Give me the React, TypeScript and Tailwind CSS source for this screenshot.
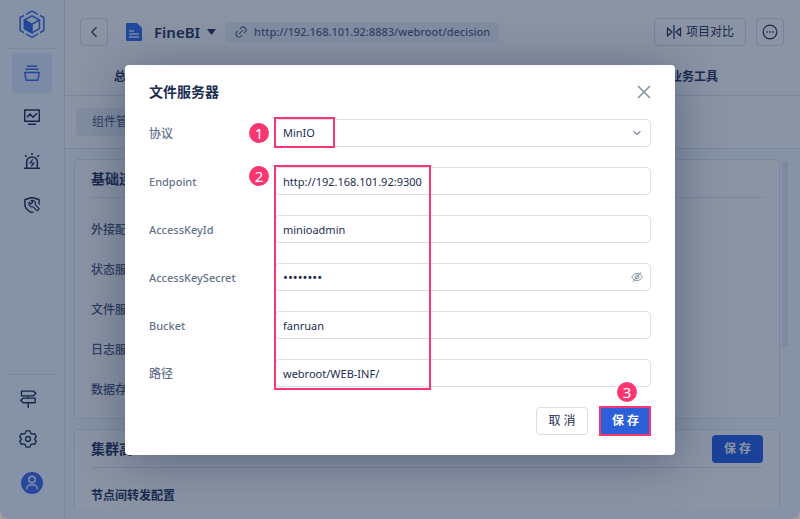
import type { ReactNode } from 'react';
import { ChevronDown, ChevronLeft, Link2, X } from 'lucide-react';

interface IconProps {
  className?: string;
  children: ReactNode;
}

const Icon = ({ className = 'size-4', children }: IconProps) => (
  <svg className={className} viewBox="0 0 16 16" fill="none" stroke="currentColor" strokeWidth="1.2" strokeLinejoin="round">
    {children}
  </svg>
);

const Logo = () => (
  <svg className="size-7" viewBox="0 0 28 28" fill="none" stroke="currentColor" strokeWidth="1.5">
    <path d="M8 4.300 14 1l6 3.300M22 5.500l3.800 2v13L22 22.700M20 23.900 14 27.300l-6-3.400M6 22.700l-3.800-2.200v-13L6 5.500" />
    <path d="M14 5.800 21.500 10v8.600L14 22.800l-7.500-4.200V10z" />
    <path d="M6.500 10 14 14.200v8.600l-7.500-4.200z" fill="currentColor" />
    <path d="M14 14.200 21.500 10" />
  </svg>
);

const ProjectsIcon = () => (
  <Icon>
    <path d="M3 1.200h10M1.500 4.200h13" strokeWidth="1.600" />
    <path d="M.8 7.500h14.400l-1.300 7.700H2.100z" strokeWidth="1.500" />
  </Icon>
);

const MonitorIcon = () => (
  <Icon>
    <path d="M.7.900h14.600v11.400H.7zM4 15.300h8M3 8.200l3-3.200 3 3.200 4-4" strokeWidth="1.500" />
  </Icon>
);

const AlarmIcon = () => (
  <Icon>
    <path d="M0 15.200h16M2.700 15V8.500a5.300 4.600 0 0 1 10.600 0V15M8 0v2M1 2.200l1.700 1.600M15 2.200l-1.700 1.600" strokeWidth="1.500" />
    <path d="M8.800 6.400 6 10h4l-2.800 3.400" />
  </Icon>
);

const ShieldToolIcon = () => (
  <Icon>
    <path d="M9.500 15.200 8 15.600C4 14 .9 11 .9 7.500V2.400C3.500 2.400 5.500.7 8 .7s4.500 1.700 7.100 1.700v5" strokeWidth="1.500" />
    <path d="M5.200 5.200 7 7l1.700-1.600-1.600-1.900a3.300 3.300 0 0 1 4.200 4.200l3.900 4.200-2 2-4.100-4A3.400 3.400 0 0 1 5.200 5.200z" />
  </Icon>
);

const SignpostIcon = () => (
  <Icon className="size-[18px]">
    <path d="M2.200 1h10.600l2.300 2-2.300 2.200H2.200zM14.400 7.200H3.800L1.500 9.300l2.300 2h10.600zM8.200 5.200v2M8.200 11.300V16" />
  </Icon>
);

const GearIcon = () => (
  <Icon className="size-[18px]">
    <path d="M6.300.8h3.400l.7 2 1.400.8 2.100-.4 1.500 2.800L14 7.600v.8l1.400 1.600-1.500 2.800-2.100-.4-1.400.8-.7 2H6.300l-.7-2-1.400-.8-2.100.4L.6 10 2 8.400v-.8L.6 6l1.500-2.800 2.100.4 1.400-.8z" />
    <circle cx="8" cy="8" r="2.200" />
  </Icon>
);

const DocIcon = () => (
  <svg className="h-[18px] w-4" viewBox="0 0 16 18">
    <path d="M1 0h10l5 5v12a1 1 0 0 1-1 1H1a1 1 0 0 1-1-1V1a1 1 0 0 1 1-1z" fill="#2d66ee" />
    <path d="M3 8h5M3 11h10M3 14h10" stroke="#dce7ff" strokeWidth="1.300" />
  </svg>
);

const CompareIcon = () => (
  <Icon>
    <path d="M8 1v14M1.500 4v8L6 8zM14.500 4v8L10 8z" strokeWidth="1.300" />
  </Icon>
);

const MoreIcon = () => (
  <Icon>
    <circle cx="8" cy="8" r="6.800" />
    <path d="M4.300 8h1.400M7.300 8h1.400M10.300 8h1.400" strokeWidth="1.500" />
  </Icon>
);

const EyeOffIcon = () => (
  <Icon className="size-3">
    <path d="M1 8c1.600-3 4-4.800 7-4.800S13.400 5 15 8c-1.600 3-4 4.800-7 4.800S2.600 11 1 8zM2.500 14.500l11-13" />
    <circle cx="8" cy="8" r="2.600" />
  </Icon>
);

const mainNav = [
  { label: '项目', icon: <ProjectsIcon />, active: true },
  { label: '监控', icon: <MonitorIcon /> },
  { label: '告警', icon: <AlarmIcon /> },
  { label: '运维', icon: <ShieldToolIcon /> },
];

const Sidebar = () => (
  <aside className="flex w-[65px] shrink-0 flex-col border-r border-[#dfe5f0] bg-[#f5faff] text-[#12264c]">
    <div className="mx-2 flex h-[49px] items-center justify-center border-b border-[#dfe5ec] text-[#2d62e8]">
      <Logo />
    </div>
    <nav className="mt-1 flex flex-col items-center gap-1">
      {mainNav.map((item) => (
        <button
          key={item.label}
          aria-label={item.label}
          className={item.active
            ? 'flex size-10 items-center justify-center rounded bg-[#dfeaff] text-[#2d62e8]'
            : 'flex size-10 items-center justify-center rounded'}
        >
          {item.icon}
        </button>
      ))}
    </nav>
    <div className="mx-2 mt-auto flex h-[145px] flex-col items-start border-t border-[#dfe5ec] pt-1">
      <button aria-label="导航" className="flex size-10 items-center justify-center"><SignpostIcon /></button>
      <button aria-label="设置" className="flex size-10 items-center justify-center"><GearIcon /></button>
      <button aria-label="用户" className="flex size-12 items-center justify-center">
        <svg className="size-[22px]" viewBox="0 0 22 22" fill="none" stroke="#dce7ff" strokeWidth="1.700">
          <circle cx="11" cy="11" r="11" fill="#3468f0" stroke="none" />
          <circle cx="11" cy="7.500" r="3.200" />
          <path d="M5.500 17.500c0-6.500 11-6.500 11 0" />
        </svg>
      </button>
    </div>
  </aside>
);

const services = ['外接配置库', '状态服务器', '文件服务器', '日志服务器', '数据存储'];

const Page = () => (
  <div className="flex min-w-0 flex-1 flex-col bg-[#f5faff]">
    <div className="bg-white">
      <header className="flex h-16 items-center pr-4 pl-[15px]">
        <button aria-label="返回" className="flex size-7 items-center justify-center rounded border border-[#d5dce8]">
          <ChevronLeft size={18} strokeWidth={1.5} />
        </button>
        <div className="ml-[18px] flex items-center">
          <DocIcon />
          <h1 className="ml-3 text-[15px] font-semibold">FineBI</h1>
          <svg className="ml-[7px] h-[6px] w-[9px]" viewBox="0 0 9 6"><path d="M0 0h9L4.500 6z" fill="currentColor" /></svg>
        </div>
        <a href="#project" className="ml-[9px] flex h-5 items-center gap-[6px] rounded-sm bg-[#edf1f7] px-[9px] text-[11px] font-medium text-[#4a5c80]">
          <Link2 size={14} strokeWidth={1.8} className="-rotate-45" />
          http://192.168.101.92:8883/webroot/decision
        </a>
        <button className="ml-auto flex h-7 items-center gap-1 rounded border border-[#d5dce8] px-[11px] text-xs">
          <CompareIcon />
          项目对比
        </button>
        <button aria-label="更多" className="ml-[10px] flex size-7 items-center justify-center rounded border border-[#d5dce8]">
          <MoreIcon />
        </button>
      </header>
      <nav className="flex h-8 justify-between border-b border-[#dfe5f0] pr-[82px] pl-[49px] text-xs font-semibold">
        <a href="#overview" className="h-[26px] leading-[26px]">总览</a>
        <a href="#tools" className="h-[26px] leading-[26px]">业务工具</a>
      </nav>
      <div className="flex h-[53px] items-center border-b border-[#dfe5f0] px-[11px]">
        <button className="h-7 rounded bg-[#edf1f7] px-4 text-xs text-[#3f5175]">组件管理</button>
      </div>
    </div>

    <main className="mt-[10px] mb-[10px] flex min-h-0 flex-1 gap-[2px] overflow-hidden pr-3 pl-[9px]">
      <div className="flex flex-1 flex-col gap-[10px]">
        <section className="h-[260px] shrink-0 rounded border border-[#dfe5f0] bg-white px-4">
          <h2 className="flex h-[38px] items-center border-b border-[#dfe5f0] text-sm font-semibold">基础连接</h2>
          <ul className="pt-3 text-xs font-medium text-[#3f5175]">
            {services.map((name) => (
              <li key={name} className="flex h-10 items-center">{name}</li>
            ))}
          </ul>
        </section>
        <section className="h-[260px] shrink-0 rounded border border-[#dfe5f0] bg-white px-4">
          <div className="flex h-[38px] items-center justify-between border-b border-[#dfe5f0]">
            <h2 className="text-sm font-semibold">集群高</h2>
            <button className="h-7 rounded bg-[#1e5ae6] px-3 text-xs font-semibold text-white">保 存</button>
          </div>
          <h3 className="flex h-14 items-center text-xs font-semibold">节点间转发配置</h3>
        </section>
      </div>
      <div className="mt-[2px] h-[186px] w-[6px] rounded-full bg-[#e3e8f4]" />
    </main>
  </div>
);

const fields = [
  { id: 'endpoint', label: 'Endpoint', type: 'text', value: 'http://192.168.101.92:9300' },
  { id: 'key-id', label: 'AccessKeyId', type: 'text', value: 'minioadmin' },
  { id: 'key-secret', label: 'AccessKeySecret', type: 'password', value: '12345678' },
  { id: 'bucket', label: 'Bucket', type: 'text', value: 'fanruan' },
  { id: 'path', label: '路径', type: 'text', value: 'webroot/WEB-INF/' },
];

// Latin text runs a size smaller than the Chinese labels
const labelSize = (label: string) => (/^[A-Za-z]/.test(label) ? 'text-[11px]' : 'text-xs');

const Badge = ({ className, children }: { className: string; children: ReactNode }) => (
  <span className={`absolute flex size-5 items-center justify-center rounded-full bg-[#f93670] text-[15px] leading-5 text-white ${className}`}>
    {children}
  </span>
);

const ServerDialog = () => (
  <div
    role="dialog"
    aria-labelledby="dialog-title"
    className="relative w-[550px] rounded bg-white px-6 pb-5 shadow-[0_6px_50px_rgba(20,35,65,0.4)]"
  >
    <div className="flex h-[54px] items-center justify-between">
      <h2 id="dialog-title" className="text-sm font-semibold">文件服务器</h2>
      <button aria-label="关闭" className="-mr-1 text-[#8893a8]">
        <X size={22} strokeWidth={1.8} />
      </button>
    </div>

    <form className="flex flex-col gap-5 text-[11px]">
      <div className="relative flex h-7 items-center">
        <label htmlFor="protocol" className="w-[126px] pt-[2px] text-xs font-medium text-[#65728a]">协议</label>
        <select id="protocol" defaultValue="MinIO" className="h-7 flex-1 appearance-none rounded border border-[#d9dee8] bg-white px-[7px]">
          <option>MinIO</option>
        </select>
        <ChevronDown size={12} className="pointer-events-none absolute right-2" />
      </div>
      {fields.map((field) => (
        <div key={field.id} className="relative flex h-7 items-center">
          <label htmlFor={field.id} className={`w-[126px] pt-[2px] font-medium text-[#65728a] ${labelSize(field.label)}`}>{field.label}</label>
          <input
            id={field.id}
            type={field.type}
            defaultValue={field.value}
            className={`h-7 min-w-0 flex-1 rounded border border-[#d9dee8] bg-white px-[7px] ${field.type === 'password' ? 'text-[13px]' : ''}`}
          />
          {field.type === 'password' && (
            <button type="button" aria-label="显示密码" className="absolute right-2 text-[#7c889d]">
              <EyeOffIcon />
            </button>
          )}
        </div>
      ))}
    </form>

    <div className="mt-5 flex justify-end gap-3">
      <button className="h-7 w-[52px] rounded border border-[#d9dee8] text-xs">取 消</button>
      <button className="h-7 w-[51px] rounded bg-[#2c60db] text-xs font-semibold text-white">保 存</button>
    </div>

    {/* Step markers */}
    <div className="pointer-events-none absolute top-[52px] left-[149px] h-[31px] w-[61px] border-2 border-[#f93670]" />
    <div className="pointer-events-none absolute top-[100px] left-[149px] h-[225px] w-[157px] border-2 border-[#f93670]" />
    <div className="pointer-events-none absolute right-6 bottom-[19px] h-[30px] w-[52px] border-2 border-[#f93670]" />
    <Badge className="top-[58px] left-[124px]">1</Badge>
    <Badge className="top-[101px] left-[124px]">2</Badge>
    <Badge className="top-[317px] right-[38px]">3</Badge>
  </div>
);

const App = () => (
  <div className="h-screen bg-[#a0a0a0] font-['Noto_Sans','Noto_Sans_CJK_SC',sans-serif] text-[#1b2d50]">
    <div className="relative flex h-full overflow-hidden rounded-b-lg">
      <Sidebar />
      <Page />
      <div className="absolute inset-0 flex items-start justify-center bg-[#182a4c]/50 pt-[65px]">
        <ServerDialog />
      </div>
    </div>
  </div>
);

export default App;
